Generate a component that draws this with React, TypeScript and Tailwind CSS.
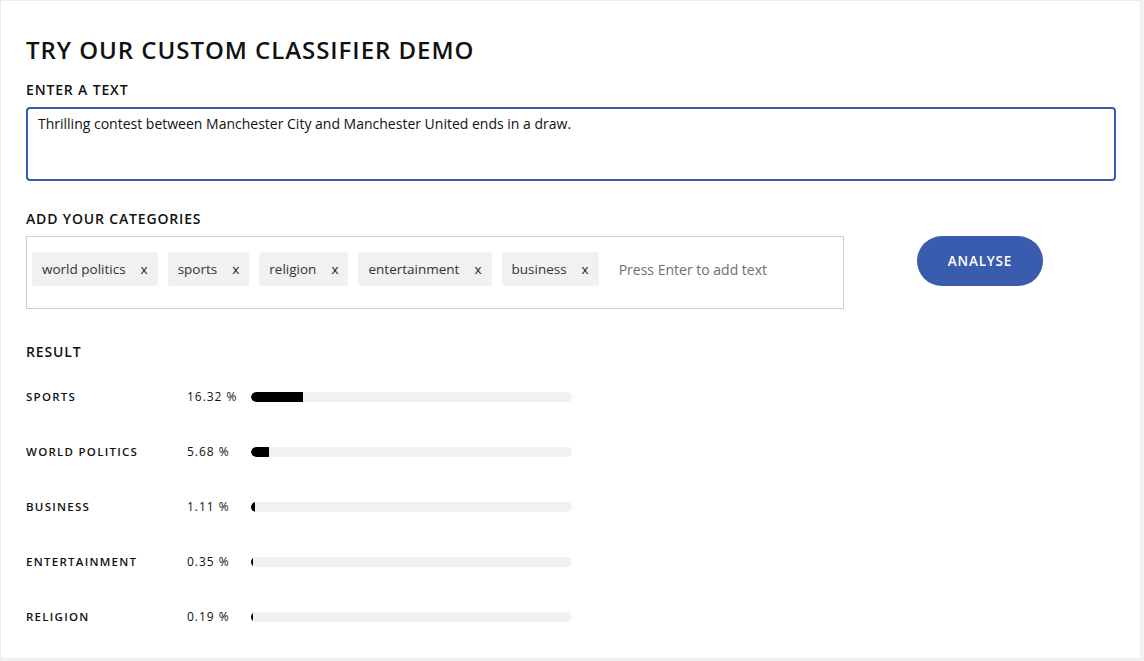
import React from 'react'

const tags = ['world politics', 'sports', 'religion', 'entertainment', 'business']

const results = [
  { label: 'SPORTS', value: 16.32 },
  { label: 'WORLD POLITICS', value: 5.68 },
  { label: 'BUSINESS', value: 1.11 },
  { label: 'ENTERTAINMENT', value: 0.35 },
  { label: 'RELIGION', value: 0.19 },
]

// 분류기 데모 카드
export default function App() {
  return (
    <div className="h-[661px] w-[1144px] overflow-hidden bg-[#f3f3f3] font-['Open_Sans',sans-serif] text-[#111]">
      <div className="h-[659px] w-[1141px] border border-[#ececec] bg-white px-[25px] pt-[34px]">
        <h1 className="text-[24px] font-semibold leading-[30px] tracking-[0.04em]">
          TRY OUR CUSTOM CLASSIFIER DEMO
        </h1>

        <div className="mt-[16px] text-[14px] font-semibold leading-[18px] tracking-[0.06em]">ENTER A TEXT</div>
        <div className="mt-[8px] h-[74px] w-[1090px] rounded-[4px] border-2 border-[#3a5db3] px-[10px] pt-[5px] text-[14px] leading-[20px]">
          Thrilling contest between Manchester City and Manchester United ends in a draw.
        </div>

        <div className="mt-[29px] text-[14px] font-semibold leading-[18px] tracking-[0.06em]">ADD YOUR CATEGORIES</div>
        <div className="mt-[8px] flex items-start">
          <div className="flex h-[73px] w-[818px] items-start gap-[10px] border border-[#cfcfcf] px-[5px] pt-[15px]">
            {tags.map((t) => (
              <span
                key={t}
                className="flex h-[34px] items-center gap-[15px] rounded-[3px] bg-[#f1f1f1] px-[10px] text-[13.5px] text-[#333]"
              >
                {t}
                <span className="text-[13.5px] text-[#222]">x</span>
              </span>
            ))}
            <span className="ml-[10px] flex h-[34px] items-center text-[14px] text-[#6f6f6f]">Press Enter to add text</span>
          </div>
          <button className="ml-[73px] h-[50px] w-[126px] rounded-full bg-[#3a5cae] text-[13.5px] font-semibold tracking-[0.06em] text-white">
            ANALYSE
          </button>
        </div>

        <div className="mt-[34px] text-[14px] font-semibold leading-[18px] tracking-[0.06em]">RESULT</div>
        <div className="mt-[27px] flex flex-col gap-[37px]">
          {results.map((r) => (
            <div key={r.label} className="flex h-[18px] items-center leading-[18px]">
              <span className="w-[161px] text-[11.5px] font-semibold tracking-[0.11em]">{r.label}</span>
              <span className="w-[64px] text-[12px] tracking-[0.08em]">{r.value.toFixed(2)} %</span>
              <div className="h-[10px] w-[321px] overflow-hidden rounded-full bg-[#f1f1f1]">
                <div className="h-full rounded-l-full bg-black" style={{ width: `${Math.max(r.value, 0.6)}%` }} />
              </div>
            </div>
          ))}
        </div>
      </div>
    </div>
  )
}
